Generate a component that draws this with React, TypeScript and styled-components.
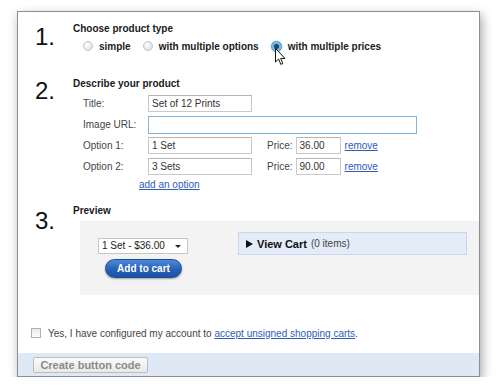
import React from 'react';
import styled, { createGlobalStyle } from 'styled-components';

const Global = createGlobalStyle`
    body {
        margin: 0;
        background: #fff;
        font-family: 'Liberation Sans', Arial, sans-serif;
    }
`;

const Frame = styled.div`
    position: relative;
    margin: 11px 0 0 17px;
    width: 461px;
    height: 364px;
    border: 1px solid #8e8e8e;
    background: #fff;
    box-shadow: 2px 4px 10px rgba(0, 0, 0, 0.35);
    display: flex;
    flex-direction: column;
`;

const Steps = styled.div`
    padding: 10px 0 0 17px;
    flex: 1;
`;

const Step = styled.div<{ gap: number }>`
    display: grid;
    grid-template-columns: 38px 1fr;
    margin-top: ${(p) => p.gap}px;
`;

const StepNum = styled.div<{ offset: number }>`
    font-size: 24px;
    line-height: 24px;
    color: #111;
    margin-top: ${(p) => p.offset}px;
`;

const StepBody = styled.div``;

const Heading = styled.div`
    font-size: 10px;
    font-weight: bold;
    line-height: 14px;
    color: #1a1a1a;
`;

const RadioRow = styled.div`
    display: flex;
    align-items: center;
    gap: 12px;
    margin-top: 3px;
    padding-left: 10px;
    height: 14px;
`;

const RadioItem = styled.label`
    display: flex;
    align-items: center;
    gap: 6px;
    font-size: 10px;
    font-weight: bold;
    color: #1a1a1a;
`;

const Radio = styled.span<{ checked?: boolean }>`
    width: ${(p) => (p.checked ? 9 : 8)}px;
    height: ${(p) => (p.checked ? 9 : 8)}px;
    border-radius: 50%;
    border: 1px solid ${(p) => (p.checked ? '#4b8fb8' : '#c4c4c4')};
    background: ${(p) =>
        p.checked
            ? 'radial-gradient(circle, #16496b 0 2px, #6fb4d8 3px, #a9d6ec 100%)'
            : 'radial-gradient(circle at 35% 35%, #fff, #d8d8d8)'};
    box-shadow: ${(p) => (p.checked ? '0 0 2px #7cc3e6' : 'none')};
`;

const Form = styled.div`
    padding-left: 10px;
    margin-top: 4px;
    display: flex;
    flex-direction: column;
    gap: 4px;
`;

const Row = styled.div`
    display: flex;
    align-items: center;
    height: 17px;
`;

const Label = styled.span`
    width: 65px;
    font-size: 10px;
    color: #444;
`;

const Input = styled.div<{ width: number; focus?: boolean }>`
    box-sizing: border-box;
    width: ${(p) => p.width}px;
    height: ${(p) => (p.focus ? 18 : 17)}px;
    border: 1px solid ${(p) => (p.focus ? '#7fb5dc' : '#c9c9c9')};
    border-top-color: ${(p) => (p.focus ? '#7fb5dc' : '#b5b5b5')};
    padding: 0 3px;
    font-size: 10px;
    line-height: 15px;
    color: #333;
    background: #fff;
`;

const PriceLabel = styled.span`
    margin-left: 15px;
    margin-right: 3px;
    font-size: 10px;
    color: #444;
`;

const Link = styled.a`
    font-size: 10px;
    color: #2f5cb8;
    text-decoration: underline;
`;

const RemoveLink = styled(Link)`
    margin-left: 4px;
`;

const AddLink = styled(Link)`
    display: block;
    margin: 3px 0 0 66px;
    line-height: 14px;
`;

const Panel = styled.div`
    margin: 3px 0 0 7px;
    height: 74px;
    background: #f3f3f3;
    display: flex;
    align-items: flex-start;
    padding: 11px 12px 0 18px;
    box-sizing: border-box;
`;

const PreviewLeft = styled.div`
    width: 140px;
    margin-top: 6px;
    display: flex;
    flex-direction: column;
    align-items: flex-start;
`;

const Select = styled.div`
    box-sizing: border-box;
    width: 90px;
    height: 16px;
    border: 1px solid #c6c6c6;
    background: #fff;
    font-size: 10px;
    line-height: 14px;
    padding-left: 3px;
    color: #222;
    display: flex;
    justify-content: space-between;
    align-items: center;
`;

const Caret = styled.span`
    width: 0;
    height: 0;
    margin-right: 6px;
    border-left: 3px solid transparent;
    border-right: 3px solid transparent;
    border-top: 3px solid #222;
`;

const CartButton = styled.div`
    margin: 5px 0 0 7px;
    width: 77px;
    height: 19px;
    box-sizing: border-box;
    border-radius: 10px;
    border: 1px solid #1c4c93;
    background: linear-gradient(#4f8ad8, #2661b8 55%, #1c51a4);
    box-shadow: 0 1px 2px rgba(0, 0, 0, 0.35);
    color: #fff;
    font-size: 10px;
    font-weight: bold;
    display: flex;
    align-items: center;
    justify-content: center;
`;

const ViewCart = styled.div`
    flex: 1;
    height: 23px;
    box-sizing: border-box;
    background: #e3ecf8;
    border: 1px solid #c8d8ec;
    display: flex;
    align-items: center;
    padding-left: 7px;
    color: #111;
`;

const Arrow = styled.span`
    width: 0;
    height: 0;
    border-top: 4px solid transparent;
    border-bottom: 4px solid transparent;
    border-left: 7px solid #111;
    margin-right: 4px;
`;

const CartTitle = styled.span`
    font-size: 11px;
    font-weight: bold;
    margin-right: 4px;
`;

const CartCount = styled.span`
    font-size: 10px;
    color: #444;
`;

const ConfirmRow = styled.div`
    display: flex;
    align-items: center;
    gap: 7px;
    padding-left: 13px;
    height: 14px;
    margin-bottom: 13px;
    font-size: 10px;
    color: #444;
`;

const Checkbox = styled.span`
    width: 8px;
    height: 8px;
    border: 1px solid #b0b0b0;
    background: linear-gradient(#e8e8e8, #fdfdfd);
`;

const BottomBar = styled.div`
    height: 23px;
    background: #dfe9f5;
    display: flex;
    align-items: center;
    padding-left: 15px;
`;

const CreateButton = styled.div`
    width: 115px;
    height: 16px;
    box-sizing: border-box;
    border: 1px solid #bdbdbd;
    border-radius: 2px;
    background: linear-gradient(#fafafa, #e9e9e9);
    color: #8a8a8a;
    font-size: 11px;
    font-weight: bold;
    display: flex;
    align-items: center;
    justify-content: center;
`;

const Cursor = styled.svg`
    position: absolute;
    left: 257px;
    top: 36px;
`;

const options = [
    { name: '1 Set', price: '36.00' },
    { name: '3 Sets', price: '90.00' },
];

export default function App() {
    return (
        <>
            <Global />
            <Frame>
                <Steps>
                    <Step gap={0}>
                        <StepNum offset={3}>1.</StepNum>
                        <StepBody>
                            <Heading>Choose product type</Heading>
                            <RadioRow>
                                <RadioItem>
                                    <Radio />
                                    simple
                                </RadioItem>
                                <RadioItem>
                                    <Radio />
                                    with multiple options
                                </RadioItem>
                                <RadioItem>
                                    <Radio checked />
                                    with multiple prices
                                </RadioItem>
                            </RadioRow>
                        </StepBody>
                    </Step>

                    <Step gap={24}>
                        <StepNum offset={2}>2.</StepNum>
                        <StepBody>
                            <Heading>Describe your product</Heading>
                            <Form>
                                <Row>
                                    <Label>Title:</Label>
                                    <Input width={104}>Set of 12 Prints</Input>
                                </Row>
                                <Row>
                                    <Label>Image URL:</Label>
                                    <Input width={269} focus />
                                </Row>
                                {options.map((o, i) => (
                                    <Row key={o.name}>
                                        <Label>Option {i + 1}:</Label>
                                        <Input width={104}>{o.name}</Input>
                                        <PriceLabel>Price:</PriceLabel>
                                        <Input width={45}>{o.price}</Input>
                                        <RemoveLink>remove</RemoveLink>
                                    </Row>
                                ))}
                            </Form>
                            <AddLink>add an option</AddLink>
                        </StepBody>
                    </Step>

                    <Step gap={12}>
                        <StepNum offset={5}>3.</StepNum>
                        <StepBody>
                            <Heading>Preview</Heading>
                            <Panel>
                                <PreviewLeft>
                                    <Select>
                                        1 Set - $36.00
                                        <Caret />
                                    </Select>
                                    <CartButton>Add to cart</CartButton>
                                </PreviewLeft>
                                <ViewCart>
                                    <Arrow />
                                    <CartTitle>View Cart</CartTitle>
                                    <CartCount>(0 items)</CartCount>
                                </ViewCart>
                            </Panel>
                        </StepBody>
                    </Step>
                </Steps>

                <ConfirmRow>
                    <Checkbox />
                    <span>
                        Yes, I have configured my account to{' '}
                        <Link>accept unsigned shopping carts</Link>.
                    </span>
                </ConfirmRow>
                <BottomBar>
                    <CreateButton>Create button code</CreateButton>
                </BottomBar>

                <Cursor width="12" height="18" viewBox="0 0 12 18">
                    <path
                        d="M0.5 0.5 L0.5 14 L3.6 11 L5.8 16.4 L7.8 15.5 L5.7 10.4 L10 10.4 Z"
                        fill="#fff"
                        stroke="#111"
                        strokeWidth="1"
                        strokeLinejoin="round"
                    />
                </Cursor>
            </Frame>
        </>
    );
}
